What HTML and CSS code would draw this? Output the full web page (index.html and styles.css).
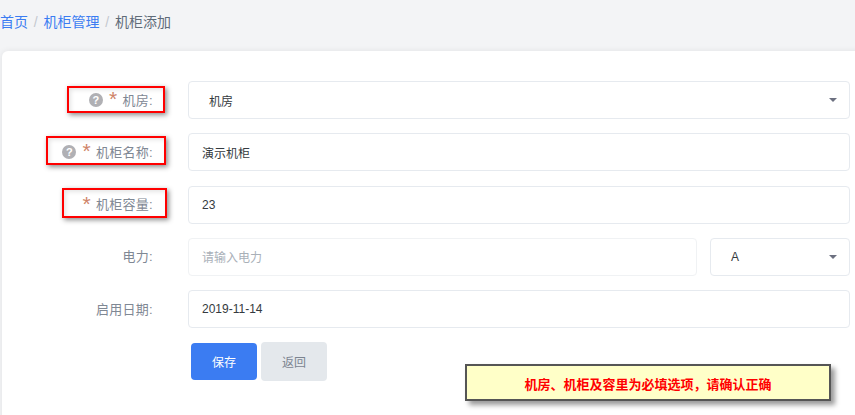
FILE: index.html
```html
<!DOCTYPE html>
<html lang="zh-CN">
<head>
<meta charset="utf-8">
<title>机柜添加</title>
<link rel="stylesheet" href="styles.css">
</head>
<body>
<nav class="crumbs">
  <a class="crumb-link">首页</a><span class="crumb-sep">/</span><a class="crumb-link">机柜管理</a><span class="crumb-sep">/</span><span class="crumb-current">机柜添加</span>
</nav>
<main class="card">
  <form class="form">
    <div class="row">
      <label class="label"><span class="help">?</span><span class="req">*</span>机房:</label>
      <div class="field select"><span>机房</span><i class="caret"></i></div>
    </div>
    <div class="row">
      <label class="label"><span class="help">?</span><span class="req">*</span>机柜名称:</label>
      <div class="field"><span>演示机柜</span></div>
    </div>
    <div class="row">
      <label class="label"><span class="req">*</span>机柜容量:</label>
      <div class="field"><span>23</span></div>
    </div>
    <div class="row">
      <label class="label">电力:</label>
      <div class="field power"><span class="placeholder">请输入电力</span></div>
      <div class="field select unit"><span>A</span><i class="caret"></i></div>
    </div>
    <div class="row">
      <label class="label">启用日期:</label>
      <div class="field"><span>2019-11-14</span></div>
    </div>
    <div class="actions">
      <button class="btn primary" type="button">保存</button>
      <button class="btn secondary" type="button">返回</button>
    </div>
  </form>
</main>
<div class="mark mark-room"></div>
<div class="mark mark-name"></div>
<div class="mark mark-cap"></div>
<div class="note">机房、机柜及容里为必填选项&#xFF0C;请确认正确</div>
</body>
</html>
```
FILE: styles.css
```css
* { box-sizing: border-box; }
html, body { margin: 0; height: 100%; overflow: hidden; }
body {
  position: relative;
  background: #f3f4f6;
  font-family: "Liberation Sans", "Noto Sans CJK SC", sans-serif;
  font-size: 12px;
  color: #343a40;
}
.crumbs {
  height: 51px;
  padding-top: 12px;
  font-size: 14px;
  line-height: 20px;
  display: flex;
}
.crumb-link { color: #3b7cf2; }
.crumb-sep { color: #c3c8cf; margin: 0 5.8px; }
.crumb-current { color: #5f6b78; }
.card {
  margin-left: 2px;
  height: 380px;
  width: 870px;
  background: #fff;
  border-radius: 6px;
  box-shadow: 0 0 6px rgba(0, 0, 0, .08);
  padding: 30px 0 0 0;
}
.form { display: flex; flex-direction: column; gap: 14.3px; }
.row { display: flex; height: 38px; align-items: center; }
.label {
  width: 151px;
  padding-bottom: 2px;
  text-align: right;
  font-size: 13px;
  letter-spacing: .3px;
  color: #7f8894;
  display: flex;
  justify-content: flex-end;
  align-items: center;
}
.help {
  width: 14px;
  height: 14px;
  margin-top: 2px;
  border-radius: 50%;
  background: #b0b0b4;
  color: #fff;
  font-size: 11px;
  font-weight: bold;
  line-height: 14px;
  text-align: center;
  margin-right: 6px;
}
.req { color: #cf8468; font-size: 21px; line-height: 14px; margin-right: 5px; }
.field {
  margin-left: 35px;
  width: 662px;
  height: 38px;
  border: 1px solid #e6eaef;
  border-radius: 4px;
  background: #fff;
  padding: 0 13px;
  display: flex;
  align-items: center;
  justify-content: space-between;
}
.select { padding: 0 12px 0 20px; }
.power { width: 509px; border-color: #f0f2f4; }
.unit { margin-left: 13px; width: 140px; }
.placeholder { color: #a9b0b8; }
.caret {
  width: 0;
  height: 0;
  border-left: 4px solid transparent;
  border-right: 4px solid transparent;
  border-top: 4px solid #6c7080;
}
.actions { display: flex; gap: 4px; padding-left: 189px; align-items: center; }
.btn {
  width: 66px;
  border: 0;
  border-radius: 4px;
  font: inherit;
}
.primary { height: 37px; background: #3b7cf2; color: #fff; }
.secondary { height: 39px; background: #e4e8ec; color: #7b8490; }
.mark {
  position: absolute;
  border: 2.5px solid #f00;
  box-shadow: 2px 2px 5px rgba(0, 0, 0, .45), inset 2px 2px 4px rgba(0, 0, 0, .1);
}
.mark-room { left: 67px; top: 86px; width: 98px; height: 27px; }
.mark-name { left: 46px; top: 136px; width: 120px; height: 29px; }
.mark-cap { left: 62px; top: 188px; width: 105px; height: 30px; }
.note {
  position: absolute;
  left: 465px;
  top: 364px;
  width: 366px;
  height: 37px;
  border: 2px solid #555;
  background: #ffffc8;
  box-shadow: 4px 4px 5px rgba(0, 0, 0, .4);
  color: #f00;
  font-family: "Noto Sans CJK SC", sans-serif;
  font-size: 13px;
  font-weight: bold;
  line-height: 35px;
  text-align: center;
}
```
